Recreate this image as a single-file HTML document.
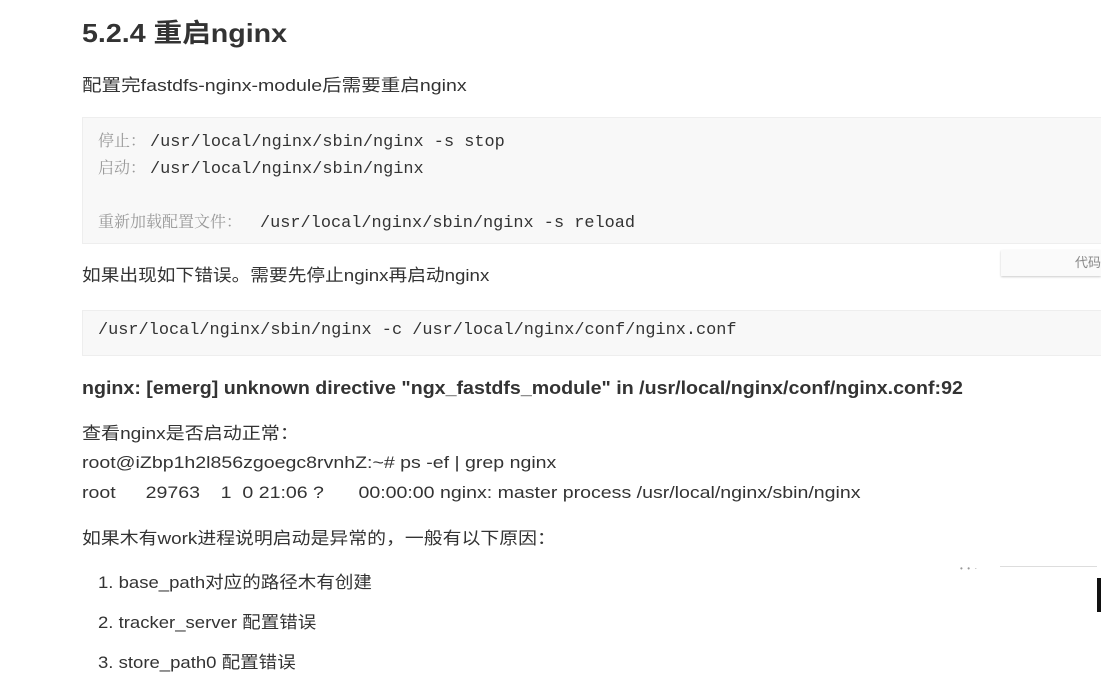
<!DOCTYPE html>
<html><head><meta charset="utf-8"><style>
body{margin:0;width:1101px;height:690px;background:#fff;overflow:hidden;position:relative;font-family:"Liberation Sans","Noto Sans CJK SC",sans-serif;color:#333;}
.a{position:absolute;white-space:nowrap;transform-origin:0 50%;}
.t{font-size:17px;line-height:20px;transform:scaleX(1.15);}
.c{transform:scaleX(1.1);}
.code{position:absolute;left:82px;right:0;background:#f8f8f8;border:1px solid #eee;border-right:none;}
.m{font-family:"Liberation Mono","Noto Sans CJK SC",monospace;font-size:16.9px;color:#333;}
.g{color:#999;font-family:"Noto Serif CJK SC","Liberation Serif",serif;font-size:16px;display:inline-block;}
</style></head><body>
<div class="a" style="left:82px;top:16px;font-size:26px;font-weight:bold;color:#333;line-height:34px;transform:scaleX(1.1);">5.2.4 重启nginx</div>
<div class="a t" style="left:82px;top:76px;">配置完fastdfs-nginx-module后需要重启nginx</div>
<div class="code" style="top:117px;height:125px;"></div>
<div class="a m" style="left:98px;top:130px;line-height:20px;"><span class="g" style="width:52px">停止：</span>/usr/local/nginx/sbin/nginx -s stop</div>
<div class="a m" style="left:98px;top:157px;line-height:20px;"><span class="g" style="width:52px">启动：</span>/usr/local/nginx/sbin/nginx</div>
<div class="a m" style="left:98px;top:211px;line-height:20px;"><span class="g" style="width:162px">重新加载配置文件：</span>/usr/local/nginx/sbin/nginx -s reload</div>
<div class="a" style="left:1001px;top:250px;width:100px;height:26px;background:#fafafa;box-shadow:0 1px 2px #ccc;font-size:13px;color:#888;line-height:26px;text-align:right;">代码</div>
<div class="a t c" style="left:82px;top:266px;">如果出现如下错误。需要先停止nginx再启动nginx</div>
<div class="code" style="top:310px;height:44px;"></div>
<div class="a m" style="left:98px;top:321px;line-height:20px;">/usr/local/nginx/sbin/nginx -c /usr/local/nginx/conf/nginx.conf</div>
<div class="a t" style="left:82px;top:378px;font-weight:bold;font-size:18px;transform:scaleX(1.09);">nginx: [emerg] unknown directive "ngx_fastdfs_module" in /usr/local/nginx/conf/nginx.conf:92</div>
<div class="a t" style="left:82px;top:424px;transform:scaleX(1.12);">查看nginx是否启动正常：</div>
<div class="a t" style="left:82px;top:453px;">root@iZbp1h2l856zgoegc8rvnhZ:~# ps -ef | grep nginx</div>
<div class="a t" style="left:82px;top:483px;">root<span style="display:inline-block;width:26px"></span>29763<span style="display:inline-block;width:18px"></span>1&nbsp; 0 21:06 ?<span style="display:inline-block;width:30px"></span>00:00:00 nginx: master process /usr/local/nginx/sbin/nginx</div>
<div class="a t c" style="left:82px;top:529px;transform:scaleX(1.11);">如果木有work进程说明启动是异常的，一般有以下原因：</div>
<div class="a t c" style="left:98px;top:573px;transform:scaleX(1.09);">1. base_path对应的路径木有创建</div>
<div class="a t c" style="left:98px;top:613px;transform:scaleX(1.09);">2. tracker_server 配置错误</div>
<div class="a t c" style="left:98px;top:653px;transform:scaleX(1.09);">3. store_path0 配置错误</div>
<div class="a" style="left:1000px;top:566px;width:97px;height:1px;background:#ddd;"></div>
<div class="a" style="left:1097px;top:578px;width:4px;height:34px;background:#111;"></div>
<div class="a" style="left:960px;top:564px;font-size:8px;color:#999;">•&nbsp; •&nbsp; ·</div>
</body></html>
